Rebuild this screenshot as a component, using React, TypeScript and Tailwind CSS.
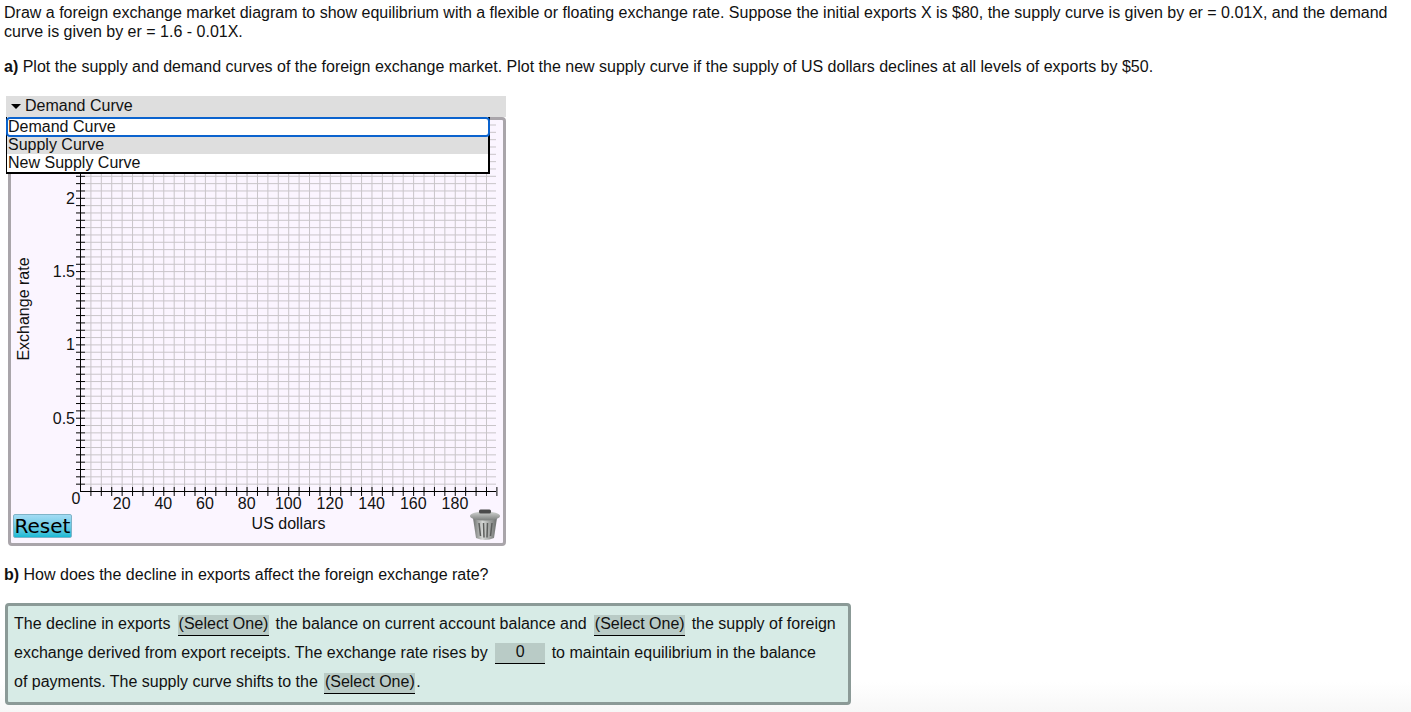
const xs = Array.from({ length: 40 }, (_, i) => i + 1);
const ys = Array.from({ length: 50 }, (_, i) => i + 1);
const xAt = (i: number) => 80.5 + i * 10.41;
const yAt = (i: number) => 491.5 - i * 7.33;

const xLabels = [20, 40, 60, 80, 100, 120, 140, 160, 180];
const yLabels = [
  { t: '0.5', i: 10 },
  { t: '1', i: 20 },
  { t: '1.5', i: 30 },
  { t: '2', i: 40 },
];

function Plot() {
  return (
    <svg className="block w-[490px] h-[392px]" viewBox="11 120 490 392">
      {xs.map((i) => (
        <g key={i}>
          {i < 40 && <line x1={xAt(i)} x2={xAt(i)} y1={yAt(50)} y2={yAt(0)} stroke="#c9c5c9" strokeWidth="1" />}
          <line x1={xAt(i)} x2={xAt(i)} y1="487" y2="496" stroke="#000" strokeWidth="1" />
        </g>
      ))}
      {ys.map((i) => (
        <g key={i}>
          <line x1="85" x2="496" y1={yAt(i)} y2={yAt(i)} stroke="#c9c5c9" strokeWidth="1" />
          <line x1="76" x2="85" y1={yAt(i)} y2={yAt(i)} stroke="#000" strokeWidth="1" />
        </g>
      ))}
      <line x1="80.5" x2="80.5" y1="120" y2="492" stroke="#000" strokeWidth="1" />
      <line x1="80" x2="496" y1="491.5" y2="491.5" stroke="#000" strokeWidth="1" />
      <g fontSize="16" fill="#111">
        <text x="76" y="504" textAnchor="middle">0</text>
        {xLabels.map((n) => (
          <text key={n} x={80 + n * 2.083} y="509" textAnchor="middle">
            {n}
          </text>
        ))}
        {yLabels.map((l) => (
          <text key={l.t} x="75" y={yAt(l.i) + 5.5} textAnchor="end">
            {l.t}
          </text>
        ))}
        <text transform="translate(29 309) rotate(-90)" textAnchor="middle">
          Exchange rate
        </text>
      </g>
    </svg>
  );
}

function TrashIcon() {
  return (
    <svg className="-mt-[3px]" width="30" height="32" viewBox="0 0 30 32">
      <defs>
        <linearGradient id="can" x1="0" x2="1" y1="0" y2="0">
          <stop offset="0" stopColor="#6f7270" />
          <stop offset="0.4" stopColor="#d6d8d6" />
          <stop offset="1" stopColor="#6b6e6c" />
        </linearGradient>
        <linearGradient id="lid" x1="0" x2="0" y1="0" y2="1">
          <stop offset="0" stopColor="#d2d4d2" />
          <stop offset="1" stopColor="#7a7d7b" />
        </linearGradient>
      </defs>
      <path d="M3 9 L6 29 Q15 33 24 29 L27 9 Z" fill="url(#can)" />
      <path d="M9 14 L10.5 27 M13.5 14 L14 28.5 M17.5 14 L17 28.5 M22 14 L20.5 27" stroke="#5c5e5c" strokeWidth="1.5" fill="none" />
      <ellipse cx="15" cy="7" rx="15" ry="4.5" fill="url(#lid)" />
      <rect x="9" y="0.5" width="12" height="4" rx="1.5" fill="#4a4a4a" />
    </svg>
  );
}

function Pick({ className = '' }: { className?: string }) {
  return (
    <span className={`inline-block w-[91px] text-center bg-[#b9cbc6] border-b border-black leading-[17px] h-[21px] ${className}`}>
      (Select One)
    </span>
  );
}

export default function App() {
  return (
    <div className="relative w-[1411px] h-[712px] overflow-hidden bg-white text-[#111] font-['Liberation_Sans',Arial,sans-serif] text-[16px]">
      <p className="pl-[4px] pt-[3px] pr-[10px] leading-[19px]">
        Draw a foreign exchange market diagram to show equilibrium with a flexible or floating exchange rate. Suppose the initial exports X is $80, the supply curve is given by er = 0.01X, and the demand curve is given by er = 1.6 - 0.01X.
      </p>
      <p className="pl-[4px] mt-[16px] leading-[19px]">
        <b>a)</b> Plot the supply and demand curves of the foreign exchange market. Plot the new supply curve if the supply of US dollars declines at all levels of exports by $50.
      </p>

      <div className="relative ml-[6px] mt-[20px] w-[500px]">
        <div className="flex items-center gap-[4px] h-[21px] pl-[5px] bg-[#dedede]">
          <span className="w-0 h-0 border-x-[5px] border-x-transparent border-t-[5px] border-t-black" />
          <span className="leading-[17px] pb-[2px]">Demand Curve</span>
        </div>
        <div className="ml-[2px] h-[429px] bg-[#fbf5ff] border-[3px] border-[#a9a5aa] rounded-[4px]">
          <Plot />
          <div className="flex items-start justify-between pl-[2px] pr-[3px]">
            <button className="mt-[2px] w-[59px] h-[24px] rounded-[2px] border border-[#7fb4c8] bg-gradient-to-b from-[#a2dcf5] to-[#12bad4] font-['DejaVu_Sans',sans-serif] text-[20px] leading-[22px] text-black">
              Reset
            </button>
            <span className="mt-[3px] ml-[35px] leading-[18px]">US dollars</span>
            <TrashIcon />
          </div>
        </div>

        {/* open dropdown list sits over the chart */}
        <div className="absolute left-0 top-[21px] w-[484px] h-[57px] bg-white border-l border-r-2 border-b-2 border-black leading-[18px]">
          <div className="absolute -left-[1px] -right-[2px] top-0 h-[20px] pl-0 bg-white border-2 border-[#0b63ce] rounded-[4px] leading-[16px]">
            Demand Curve
          </div>
          <div className="mt-[20px] h-[17px] pl-[1px] bg-[#dedede] leading-[15px]">Supply Curve</div>
          <div className="h-[18px] pl-[1px] leading-[17px]">New Supply Curve</div>
        </div>
      </div>

      <p className="pl-[4px] mt-[19px] leading-[19px]">
        <b>b)</b> How does the decline in exports affect the foreign exchange rate?
      </p>

      {/* faint shade along the bottom of the page */}
      <div className="absolute left-0 right-0 bottom-0 h-[30px] bg-gradient-to-b from-transparent to-[#f7f7f7]" />

      <div className="relative ml-[5px] mt-[19px] w-[846px] h-[102px] bg-[#d7ebe6] border-[3px] border-[#8b9a97] rounded-[4px] pl-[6px] pt-[3px] leading-[29px]">
        <div>
          The decline in exports <Pick className="ml-[3px] mr-[2px]" /> the balance on current account balance and <Pick className="ml-[3px] mr-[2px]" /> the supply of foreign
        </div>
        <div>
          exchange derived from export receipts. The exchange rate rises by{' '}
          <span className="inline-block align-middle w-[50px] h-[21px] ml-[3px] mr-[2px] bg-[#b9cbc6] border-b border-black text-center leading-[17px]">0</span>{' '}
          to maintain equilibrium in the balance
        </div>
        <div>
          of payments. The supply curve shifts to the <Pick className="ml-[2px] mr-[1px]" />.
        </div>
      </div>
    </div>
  );
}
